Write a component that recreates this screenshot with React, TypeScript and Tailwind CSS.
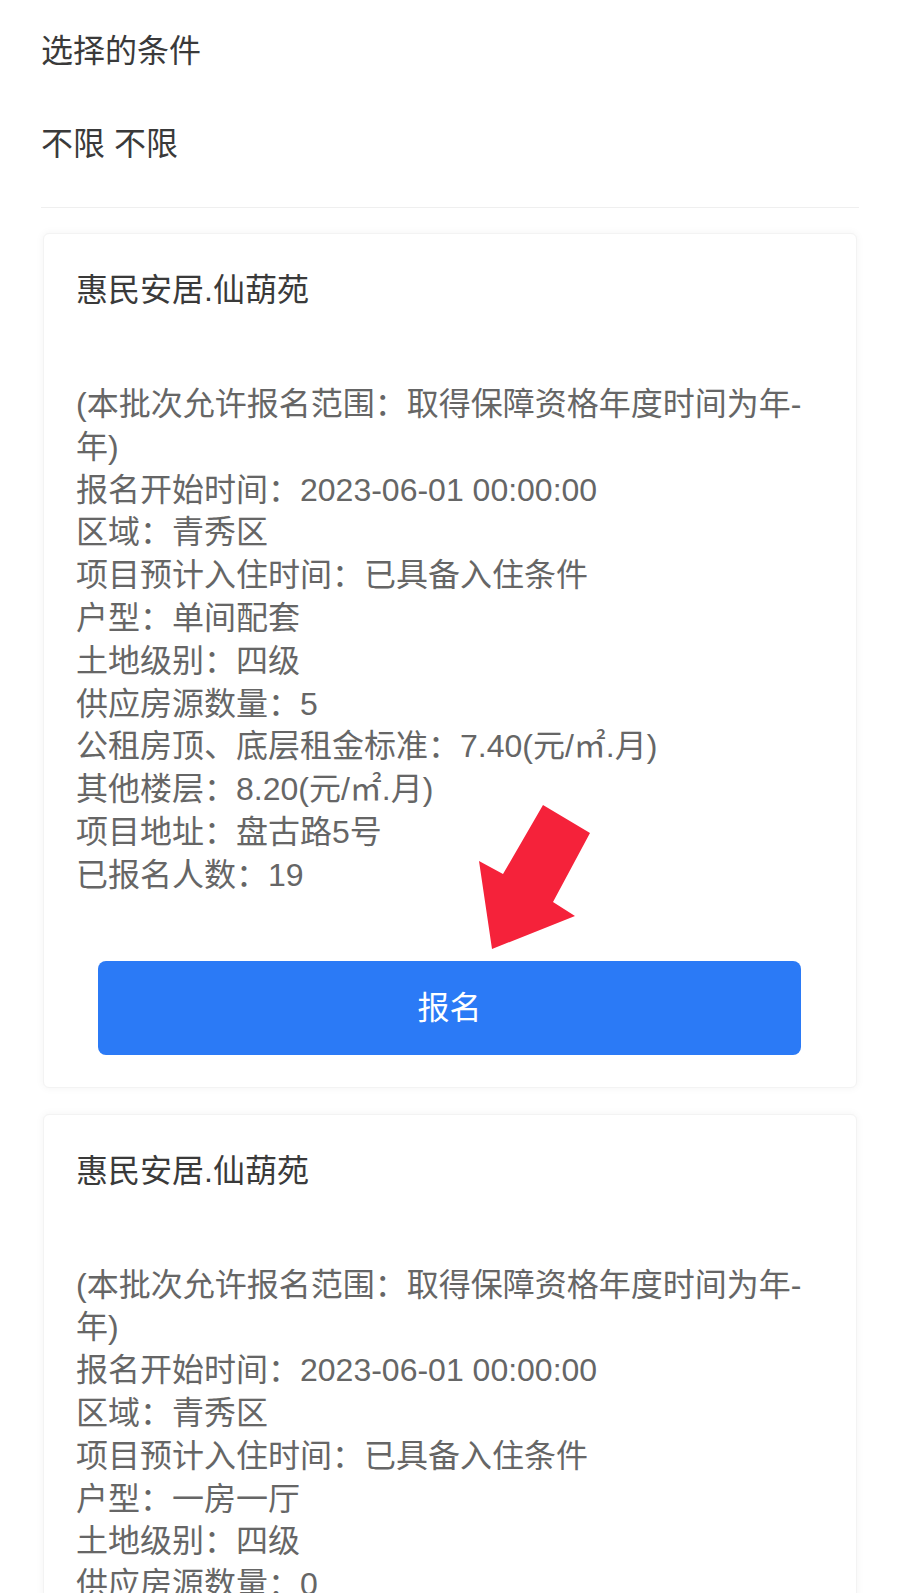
import React from "react";

type House = {
  name: string;
  lines: string[];
  showButton: boolean;
};

const houses: House[] = [
  {
    name: "惠民安居.仙葫苑",
    lines: [
      "(本批次允许报名范围：取得保障资格年度时间为年-",
      "年)",
      "报名开始时间：2023-06-01 00:00:00",
      "区域：青秀区",
      "项目预计入住时间：已具备入住条件",
      "户型：单间配套",
      "土地级别：四级",
      "供应房源数量：5",
      "公租房顶、底层租金标准：7.40(元/㎡.月)",
      "其他楼层：8.20(元/㎡.月)",
      "项目地址：盘古路5号",
      "已报名人数：19",
    ],
    showButton: true,
  },
  {
    name: "惠民安居.仙葫苑",
    lines: [
      "(本批次允许报名范围：取得保障资格年度时间为年-",
      "年)",
      "报名开始时间：2023-06-01 00:00:00",
      "区域：青秀区",
      "项目预计入住时间：已具备入住条件",
      "户型：一房一厅",
      "土地级别：四级",
      "供应房源数量：0",
    ],
    showButton: false,
  },
];

function HouseCard({ house }: { house: House }) {
  return (
    <div className="mx-[2px] rounded-md border border-[#f3f3f3] bg-white px-[32px] pt-[35px] pb-[32px] shadow-[0_0_8px_rgba(0,0,0,0.05)]">
      <p className="text-[32px] leading-[43px] text-[#3a3a3a]">{house.name}</p>
      <div className="mt-[71px] text-[32px] leading-[42.8px] text-[#666]">
        {house.lines.map((line, i) => (
          <p key={i} className="whitespace-nowrap">
            {line}
          </p>
        ))}
      </div>
      {house.showButton && (
        <button
          type="button"
          className="mx-[22px] mt-[64px] flex h-[94px] w-[703px] items-center justify-center rounded-lg bg-[#2b7af6] text-[32px] text-white"
        >
          报名
        </button>
      )}
    </div>
  );
}

export default function App() {
  return (
    <div
      className="relative h-[1593px] overflow-hidden bg-white px-[41px] pt-[30px]"
      style={{ fontFamily: '"Liberation Sans", "Noto Sans CJK SC", sans-serif' }}
    >
      <p className="text-[32px] leading-[43px] text-[#3a3a3a]">选择的条件</p>
      <p className="mt-[50px] text-[32px] leading-[43px] text-[#3a3a3a]">不限 不限</p>
      <div className="mt-[41px] h-px bg-[#efefef]" />

      <div className="mt-[25px] flex flex-col gap-[26px]">
        {houses.map((h, i) => (
          <HouseCard key={i} house={h} />
        ))}
      </div>

      {/* red pointer arrow over the first button */}
      <svg
        className="absolute left-[470px] top-[795px]"
        width="130"
        height="165"
        viewBox="0 0 130 165"
      >
        <polygon
          points="73,10 120,38 83,107 105,121 22,154 9,66 33,79"
          fill="#f5223a"
        />
      </svg>
    </div>
  );
}
